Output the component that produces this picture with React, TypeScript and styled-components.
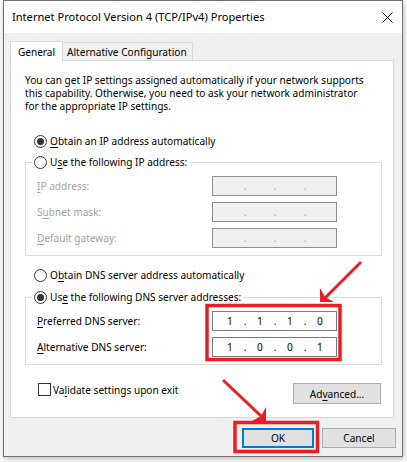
import React from 'react';
import styled, { createGlobalStyle } from 'styled-components';

const Global = createGlobalStyle`
  html, body { margin: 0; padding: 0; background: #ffffff; }
  body {
    font-family: "Noto Sans", "Open Sans", sans-serif;
    font-size: 10.1px;
    color: #000000;
  }
  #root { width: 407px; height: 462px; }
`;

const Stage = styled.div`
  position: relative;
  width: 407px;
  height: 462px;
  padding-left: 3px;
  box-sizing: border-box;
  overflow: hidden;
  background: #ffffff;
`;

const Window = styled.div`
  width: 400px;
  height: 457px;
  box-sizing: border-box;
  border: 1px solid #707070;
  display: flex;
  flex-direction: column;
  box-shadow: 1px 2px 6px rgba(0, 0, 0, 0.28);
  background: #f0f0f0;
`;

const TitleBar = styled.div`
  height: 32px;
  flex-shrink: 0;
  background: #ffffff;
  display: flex;
  align-items: center;
  justify-content: space-between;
  padding: 0 9px 0 8px;
  box-sizing: border-box;
`;

const Title = styled.span`
  font-size: 11.1px;
  line-height: 16px;
  white-space: nowrap;
`;

const Body = styled.div`
  flex: 1;
  display: flex;
  flex-direction: column;
  padding: 8px 6px 8px 6px;
  box-sizing: border-box;
`;

const TabRow = styled.div`
  display: flex;
  align-items: flex-end;
  height: 19px;
  position: relative;
  z-index: 1;
`;

const Tab = styled.div<{ $active?: boolean; $w: number }>`
  width: ${(p) => p.$w}px;
  box-sizing: border-box;
  height: ${(p) => (p.$active ? 20 : 18)}px;
  margin-bottom: ${(p) => (p.$active ? -1 : 0)}px;
  background: ${(p) => (p.$active ? '#ffffff' : '#f0f0f0')};
  border: 1px solid #d9d9d9;
  border-bottom: none;
  border-left: ${(p) => (p.$active ? '1px solid #d9d9d9' : 'none')};
  display: flex;
  align-items: center;
  justify-content: ${(p) => (p.$active ? 'center' : 'flex-start')};
  padding-left: ${(p) => (p.$active ? 0 : 4)}px;
  padding-top: ${(p) => (p.$active ? 0 : 1)}px;
  white-space: nowrap;
`;

const Panel = styled.div`
  width: 384px;
  height: 358px;
  box-sizing: border-box;
  border: 1px solid #d9d9d9;
  background: #ffffff;
  padding: 13px 10px 0 14px;
`;

const Para = styled.p`
  margin: 0;
  line-height: 13px;
  white-space: nowrap;
`;

const RadioRow = styled.div<{ $mt: number }>`
  display: flex;
  align-items: center;
  gap: 3px;
  height: 16px;
  margin: ${(p) => p.$mt}px 0 0 9px;
  white-space: nowrap;
`;

const RadioCircle = styled.span<{ $on?: boolean }>`
  width: 13px;
  height: 13px;
  box-sizing: border-box;
  border-radius: 50%;
  border: 1px solid #333333;
  background: #ffffff;
  display: flex;
  align-items: center;
  justify-content: center;
  flex-shrink: 0;
  &::after {
    content: '';
    width: 7px;
    height: 7px;
    border-radius: 50%;
    background: #333333;
    display: ${(p) => (p.$on ? 'block' : 'none')};
  }
`;

const Group = styled.fieldset<{ $mt: number }>`
  margin: ${(p) => p.$mt}px 0 0 0;
  padding: 6px 0 7px 0;
  border: 1px solid #dcdcdc;
  width: 357px;
  box-sizing: border-box;
  min-width: 0;
`;

const Legend = styled.legend`
  padding: 0 3px 0 2px;
  margin-left: 6px;
  height: 16px;
`;

const LegendInner = styled.span`
  display: flex;
  align-items: center;
  gap: 3px;
  height: 16px;
  white-space: nowrap;
`;

const FieldList = styled.div`
  display: flex;
  flex-direction: column;
  gap: 6px;
`;

const FieldRow = styled.div`
  display: flex;
  align-items: center;
  justify-content: space-between;
  height: 20px;
  padding: 0 44px 0 11px;
`;

const FieldLabel = styled.span<{ $disabled?: boolean }>`
  color: ${(p) => (p.$disabled ? '#a0a0a0' : '#000000')};
  white-space: nowrap;
`;

const IpBox = styled.div<{ $disabled?: boolean }>`
  width: 125px;
  height: 20px;
  box-sizing: border-box;
  border: 1px solid ${(p) => (p.$disabled ? '#8f8f8f' : '#7a7a7a')};
  background: ${(p) => (p.$disabled ? '#f0f0f0' : '#ffffff')};
  display: flex;
  align-items: center;
  padding-left: 5px;
  color: ${(p) => (p.$disabled ? '#a0a0a0' : '#000000')};
`;

const Octet = styled.span`
  width: 24px;
  text-align: center;
`;

const Dot = styled.span`
  width: 6px;
  text-align: center;
`;

const Acc = styled.span`
  text-decoration: underline;
  text-underline-offset: 2px;
  text-decoration-thickness: 1px;
`;

const BottomRow = styled.div`
  display: flex;
  justify-content: space-between;
  align-items: flex-start;
  width: 357px;
  margin-top: 18px;
`;

const CheckItem = styled.div`
  display: flex;
  align-items: center;
  gap: 2px;
  height: 13px;
  margin-left: 13px;
  white-space: nowrap;
`;

const CheckBox = styled.span`
  width: 13px;
  height: 13px;
  box-sizing: border-box;
  border: 1px solid #333333;
  background: #ffffff;
  flex-shrink: 0;
`;

const Button = styled.button<{ $w: number; $h?: number; $default?: boolean }>`
  width: ${(p) => p.$w}px;
  height: ${(p) => p.$h ?? 20}px;
  box-sizing: border-box;
  margin: 0;
  padding: 0;
  font: inherit;
  color: #000000;
  background: #e1e1e1;
  border: ${(p) => (p.$default ? '2px solid #0078d7' : '1px solid #adadad')};
  border-radius: 0;
  display: flex;
  align-items: center;
  justify-content: center;
`;

const AdvancedWrap = styled.div`
  margin-right: 1px;
`;

const ButtonRow = styled.div`
  display: flex;
  justify-content: flex-end;
  gap: 8px;
  margin-top: 10px;
`;

const Annotations = styled.svg`
  position: absolute;
  left: 0;
  top: 0;
  pointer-events: none;
`;

const RED = '#ec1c24';

function Ip({ values, disabled }: { values?: string[]; disabled?: boolean }) {
  const v = values ?? ['', '', '', ''];
  return (
    <IpBox $disabled={disabled}>
      <Octet>{v[0]}</Octet>
      <Dot>.</Dot>
      <Octet>{v[1]}</Octet>
      <Dot>.</Dot>
      <Octet>{v[2]}</Octet>
      <Dot>.</Dot>
      <Octet>{v[3]}</Octet>
    </IpBox>
  );
}

export default function App() {
  return (
    <>
      <Global />
      <Stage>
        <Window>
          <TitleBar>
            <Title>Internet Protocol Version 4 (TCP/IPv4) Properties</Title>
            <svg width="11" height="11" viewBox="0 0 11 11">
              <path d="M0.5 0.5 L10.5 10.5 M10.5 0.5 L0.5 10.5" stroke="#000" strokeWidth="1" fill="none" />
            </svg>
          </TitleBar>
          <Body>
            <TabRow>
              <Tab $active $w={53}>General</Tab>
              <Tab $w={130}>Alternative Configuration</Tab>
            </TabRow>
            <Panel>
              <Para>
                You can get IP settings assigned automatically if your network supports
                <br />
                this capability. Otherwise, you need to ask your network administrator
                <br />
                for the appropriate IP settings.
              </Para>

              <RadioRow $mt={20}>
                <RadioCircle $on />
                <span><Acc>O</Acc>btain an IP address automatically</span>
              </RadioRow>

              <Group $mt={5}>
                <Legend>
                  <LegendInner>
                    <RadioCircle />
                    <span>U<Acc>s</Acc>e the following IP address:</span>
                  </LegendInner>
                </Legend>
                <FieldList>
                  <FieldRow>
                    <FieldLabel $disabled><Acc>I</Acc>P address:</FieldLabel>
                    <Ip disabled />
                  </FieldRow>
                  <FieldRow>
                    <FieldLabel $disabled>S<Acc>u</Acc>bnet mask:</FieldLabel>
                    <Ip disabled />
                  </FieldRow>
                  <FieldRow>
                    <FieldLabel $disabled><Acc>D</Acc>efault gateway:</FieldLabel>
                    <Ip disabled />
                  </FieldRow>
                </FieldList>
              </Group>

              <RadioRow $mt={11}>
                <RadioCircle />
                <span>O<Acc>b</Acc>tain DNS server address automatically</span>
              </RadioRow>

              <Group $mt={6}>
                <Legend>
                  <LegendInner>
                    <RadioCircle $on />
                    <span>Us<Acc>e</Acc> the following DNS server addresses:</span>
                  </LegendInner>
                </Legend>
                <FieldList>
                  <FieldRow>
                    <FieldLabel><Acc>P</Acc>referred DNS server:</FieldLabel>
                    <Ip values={['1', '1', '1', '0']} />
                  </FieldRow>
                  <FieldRow>
                    <FieldLabel><Acc>A</Acc>lternative DNS server:</FieldLabel>
                    <Ip values={['1', '0', '0', '1']} />
                  </FieldRow>
                </FieldList>
              </Group>

              <BottomRow>
                <CheckItem>
                  <CheckBox />
                  <span>Va<Acc>l</Acc>idate settings upon exit</span>
                </CheckItem>
                <AdvancedWrap>
                  <Button $w={88} $h={21}>Ad<Acc>v</Acc>anced...</Button>
                </AdvancedWrap>
              </BottomRow>
            </Panel>
            <ButtonRow>
              <Button $w={72} $default>OK</Button>
              <Button $w={74}>Cancel</Button>
            </ButtonRow>
          </Body>
        </Window>

        <Annotations width="407" height="462" viewBox="0 0 407 462">
          <rect x="207" y="305.5" width="133" height="54" fill="none" stroke={RED} strokeWidth="3.5" />
          <rect x="235" y="422.5" width="82.5" height="29" fill="none" stroke={RED} strokeWidth="3.5" />
          <line x1="361" y1="262" x2="325" y2="298" stroke={RED} strokeWidth="3" />
          <polygon points="320,302 320,288 325,297 334,302" fill={RED} />
          <line x1="223" y1="380" x2="261" y2="416" stroke={RED} strokeWidth="3" />
          <polygon points="266,421 266,407 261,416 252,421" fill={RED} />
        </Annotations>
      </Stage>
    </>
  );
}
